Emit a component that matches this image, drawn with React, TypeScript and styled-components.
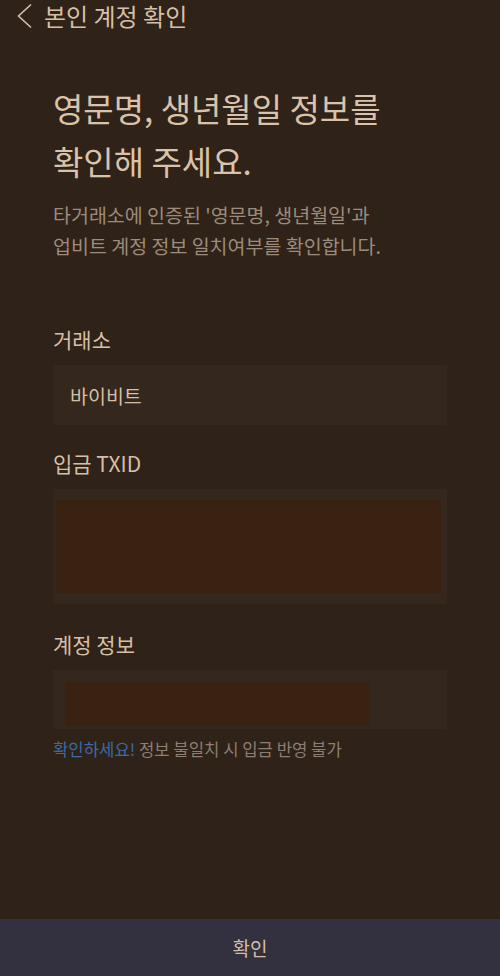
import styled, { createGlobalStyle } from "styled-components";

const GlobalStyle = createGlobalStyle`
  html, body {
    margin: 0;
    padding: 0;
    background: #2f2218;
  }
  body {
    font-family: "Noto Sans CJK KR", "Noto Sans", sans-serif;
  }
`;

const Page = styled.div`
  min-height: 976px;
  display: flex;
  flex-direction: column;
  background: #2f2218;
  color: #d6bfa6;
`;

const Header = styled.header`
  display: flex;
  align-items: center;
  gap: 9px;
  height: 32px;
  padding-left: 15px;
`;

const BackButton = styled.button`
  display: flex;
  align-items: center;
  justify-content: center;
  width: 20px;
  height: 28px;
  padding: 0;
  border: none;
  background: none;
  color: #d6bfa6;
`;

const HeaderTitle = styled.h1`
  margin: 0;
  font-size: 24px;
  line-height: 30px;
  font-weight: 400;
  white-space: nowrap;
  color: #d6bfa6;
`;

const Content = styled.main`
  display: flex;
  flex-direction: column;
  padding: 0 53px;
`;

const Heading = styled.h2`
  margin: 50px 0 0;
  font-size: 33px;
  line-height: 53px;
  font-weight: 400;
  color: #dac3ab;
`;

const Description = styled.p`
  margin: 11px 0 0;
  font-size: 19.5px;
  line-height: 31px;
  color: #9d8b7b;
`;

const Label = styled.div<{ $top: number }>`
  margin-top: ${(p) => p.$top}px;
  font-size: 21px;
  line-height: 28px;
  color: #d6bfa6;
`;

const Field = styled.div<{ $height: number; $pad: string }>`
  margin-top: 12px;
  height: ${(p) => p.$height}px;
  box-sizing: border-box;
  padding: ${(p) => p.$pad};
  display: flex;
  align-items: center;
  background: #34271e;
  font-size: 19.5px;
  color: #d6bfa6;
`;

const Redacted = styled.div<{ $width: string; $height: number }>`
  width: ${(p) => p.$width};
  height: ${(p) => p.$height}px;
  background: #3a2212;
`;

const Notice = styled.p`
  margin: 8px 0 0;
  font-size: 16.7px;
  line-height: 24px;
  color: #8c7e73;
`;

const Warn = styled.span`
  color: #3b6aa6;
`;

const Footer = styled.button`
  margin-top: auto;
  height: 57px;
  width: 100%;
  border: none;
  background: #33303f;
  color: #d6bfa6;
  font-family: inherit;
  font-size: 19px;
`;

export default function App() {
  return (
    <>
      <GlobalStyle />
      <Page>
        <Header>
          <BackButton aria-label="뒤로">
            <svg width="20" height="26" viewBox="0 0 20 26" fill="none">
              <path d="M16 1.5 L3.5 13 L16 24.5" stroke="currentColor" strokeWidth="1.6" />
            </svg>
          </BackButton>
          <HeaderTitle>본인 계정 확인</HeaderTitle>
        </Header>
        <Content>
          <Heading>
            영문명, 생년월일 정보를
            <br />
            확인해 주세요.
          </Heading>
          <Description>
            타거래소에 인증된 '영문명, 생년월일'과
            <br />
            업비트 계정 정보 일치여부를 확인합니다.
          </Description>

          <Label $top={64}>거래소</Label>
          <Field $height={60} $pad="0 17px">바이비트</Field>

          <Label $top={24}>입금 TXID</Label>
          <Field $height={115} $pad="0 6px 0 3px">
            <Redacted $width="100%" $height={93} />
          </Field>

          <Label $top={26}>계정 정보</Label>
          <Field $height={59} $pad="12px 0 3px 12px">
            <Redacted $width="305px" $height={44} />
          </Field>

          <Notice>
            <Warn>확인하세요!</Warn> 정보 불일치 시 입금 반영 불가
          </Notice>
        </Content>
        <Footer>확인</Footer>
      </Page>
    </>
  );
}
